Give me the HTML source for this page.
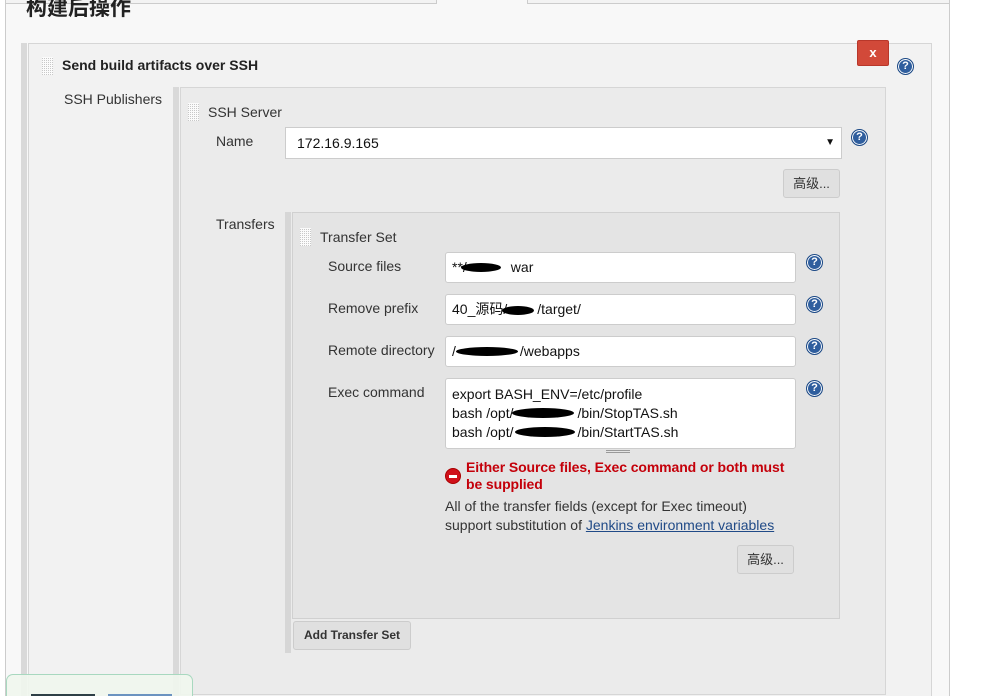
<!DOCTYPE html>
<html><head><meta charset="utf-8"><style>
*{box-sizing:border-box;margin:0;padding:0}
html,body{width:1002px;height:696px;overflow:hidden}
body{background:#fff;font-family:"Liberation Sans","Noto Sans CJK SC",sans-serif;font-size:14px;color:#333;position:relative}
.a{position:absolute}
.lbl{position:absolute;font-size:14px;color:#333}
.inp{position:absolute;background:#fff;border:1px solid #ccc;border-radius:3px;font-size:14px;color:#111;padding-left:6px;line-height:29px;height:31px}
.help{position:absolute;width:17px;height:17px;border-radius:50%;background:#2f5e9e;border:1px solid #1d4a86;box-shadow:inset 0 0 0 1px #fff;color:#fff;font:bold 11px "Liberation Sans",sans-serif;text-align:center;line-height:15px}
.handle{position:absolute;width:11px;height:18px;background-color:#fbfbfb;background-image:repeating-linear-gradient(90deg,transparent 0 1px,#fbfbfb 1px 2px),repeating-linear-gradient(0deg,#c8c8c8 0 1px,#fbfbfb 1px 2px)}
.btn{position:absolute;background:#e0e0e0;border:1px solid #ccc;border-radius:3px;font-size:13px;color:#333;text-align:center}
.blob{position:absolute;background:#000;border-radius:50%}
</style></head><body>
<div class="a" style="left:5px;top:0;width:945px;height:696px;background:#f8f8f8;border-left:1px solid #ccc;border-right:1px solid #ccc"></div>
<div class="a" style="left:5px;top:-2px;width:432px;height:6px;background:#f3f3f3;border:1px solid #ccc"></div>
<div class="a" style="left:527px;top:-2px;width:423px;height:6px;background:#f3f3f3;border:1px solid #ccc"></div>
<div class="a" style="left:26px;top:-8px;font-size:21px;font-weight:bold;color:#222">构建后操作</div>

<div class="a" style="left:21px;top:43px;width:6px;height:653px;background:#d9d9d9"></div>
<div class="a" style="left:28px;top:43px;width:904px;height:653px;background:#f2f2f2;border:1px solid #d6d6d6;border-bottom:none"></div>
<div class="handle" style="left:42px;top:57px"></div>
<div class="a" style="left:62px;top:57px;font-weight:bold;font-size:14px;color:#222">Send build artifacts over SSH</div>
<div class="a" style="left:857px;top:40px;width:32px;height:26px;background:#d24939;border:1px solid #b8372a;border-radius:2px;color:#fff;font:bold 13px 'Liberation Sans',sans-serif;text-align:center;line-height:24px">x</div>
<div class="help" style="left:897px;top:58px">?</div>

<div class="lbl" style="left:64px;top:91px">SSH Publishers</div>
<div class="a" style="left:173px;top:87px;width:6px;height:609px;background:#d9d9d9"></div>
<div class="a" style="left:180px;top:87px;width:706px;height:608px;background:#ebebeb;border:1px solid #d6d6d6"></div>
<div class="handle" style="left:188px;top:103px"></div>
<div class="lbl" style="left:208px;top:104px">SSH Server</div>
<div class="lbl" style="left:216px;top:133px">Name</div>
<div class="inp" style="left:285px;top:127px;width:557px;height:32px;border-radius:0;padding-left:11px;line-height:30px">172.16.9.165<span style="position:absolute;right:6px;top:0;font-size:10px">▼</span></div>
<div class="help" style="left:851px;top:129px">?</div>
<div class="btn" style="left:783px;top:169px;width:57px;height:29px;line-height:27px">高级...</div>

<div class="lbl" style="left:216px;top:216px">Transfers</div>
<div class="a" style="left:285px;top:212px;width:6px;height:441px;background:#d6d6d6"></div>
<div class="a" style="left:292px;top:212px;width:548px;height:407px;background:#e4e4e4;border:1px solid #d0d0d0"></div>
<div class="handle" style="left:300px;top:228px"></div>
<div class="lbl" style="left:320px;top:229px">Transfer Set</div>

<div class="lbl" style="left:328px;top:258px">Source files</div>
<div class="inp" style="left:445px;top:252px;width:351px">**/<span style="display:inline-block;width:44px"></span>war</div>
<div class="blob" style="left:461px;top:263px;width:40px;height:9px"></div>
<div class="help" style="left:806px;top:254px">?</div>

<div class="lbl" style="left:328px;top:300px">Remove prefix</div>
<div class="inp" style="left:445px;top:294px;width:351px">40_源码/<span style="display:inline-block;width:30px"></span>/target/</div>
<div class="blob" style="left:502px;top:306px;width:32px;height:9px"></div>
<div class="help" style="left:806px;top:296px">?</div>

<div class="lbl" style="left:328px;top:342px">Remote directory</div>
<div class="inp" style="left:445px;top:336px;width:351px">/<span style="display:inline-block;width:64px"></span>/webapps</div>
<div class="blob" style="left:456px;top:347px;width:62px;height:9px"></div>
<div class="help" style="left:806px;top:338px">?</div>

<div class="lbl" style="left:328px;top:384px">Exec command</div>
<div class="inp" style="left:445px;top:378px;width:351px;height:71px;line-height:19px;padding-top:6px">export BASH_ENV=/etc/profile<br>bash /opt/<span style="display:inline-block;width:64px"></span>/bin/StopTAS.sh<br>bash /opt/<span style="display:inline-block;width:64px"></span>/bin/StartTAS.sh</div>
<div class="blob" style="left:512px;top:408px;width:62px;height:10px"></div>
<div class="blob" style="left:515px;top:427px;width:60px;height:10px"></div>
<div class="a" style="left:606px;top:450px;width:24px;height:3px;border-top:1px solid #999;border-bottom:1px solid #999"></div>
<div class="help" style="left:806px;top:380px">?</div>

<div class="a" style="left:445px;top:468px;width:16px;height:16px;border-radius:50%;background:#d0101a;border:1px solid #a00"><div style="position:absolute;left:3px;top:6px;width:8px;height:3px;background:#fff"></div></div>
<div class="a" style="left:466px;top:459px;font-size:14px;font-weight:bold;color:#c4000a;line-height:17px;width:340px;letter-spacing:-0.1px">Either Source files, Exec command or both must<br>be supplied</div>
<div class="a" style="left:445px;top:497px;font-size:14px;color:#333;line-height:19px">All of the transfer fields (except for Exec timeout)<br>support substitution of <span style="color:#204a87;text-decoration:underline">Jenkins environment variables</span></div>
<div class="btn" style="left:737px;top:545px;width:57px;height:29px;line-height:27px">高级...</div>

<div class="btn" style="left:293px;top:621px;width:118px;height:29px;line-height:27px;font-weight:bold;font-size:12px">Add Transfer Set</div>

<div class="a" style="left:6px;top:674px;width:187px;height:22px;background:rgba(240,246,238,0.92);border:1px solid #a8d8bf;border-bottom:none;border-radius:7px 7px 0 0"></div>
<div class="a" style="left:31px;top:694px;width:64px;height:2px;background:#2e3f46"></div>
<div class="a" style="left:108px;top:694px;width:64px;height:2px;background:#6b93c0"></div>
</body></html>
